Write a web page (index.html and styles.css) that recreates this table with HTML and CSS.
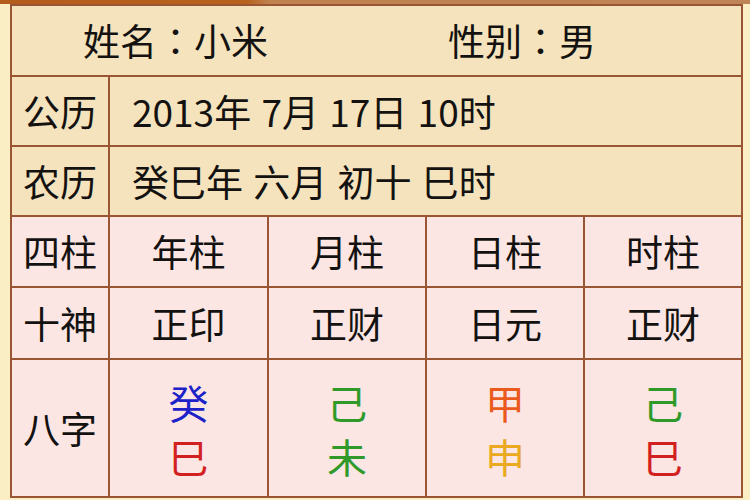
FILE: index.html
```html
<!DOCTYPE html>
<html lang="zh">
<head>
<meta charset="utf-8">
<link rel="stylesheet" href="styles.css">
</head>
<body>
<div class="topbar"></div>
<div class="chart">
  <div class="cell head full">
    <span class="name">姓名<span class="colon" lang="zh-Hant-TW">：</span>小米</span>
    <span class="gender">性别<span class="colon" lang="zh-Hant-TW">：</span>男</span>
  </div>
  <div class="cell cream label">公历</div>
  <div class="cell cream value">2013年 7月 17日 10时</div>
  <div class="cell cream label">农历</div>
  <div class="cell cream value">癸巳年 六月 初十 巳时</div>

  <div class="cell pink label">四柱</div>
  <div class="cell pink">年柱</div>
  <div class="cell pink">月柱</div>
  <div class="cell pink">日柱</div>
  <div class="cell pink">时柱</div>

  <div class="cell pink label">十神</div>
  <div class="cell pink">正印</div>
  <div class="cell pink">正财</div>
  <div class="cell pink">日元</div>
  <div class="cell pink">正财</div>

  <div class="cell pink label">八字</div>
  <div class="cell pink bazi"><span class="water">癸</span><span class="fire">巳</span></div>
  <div class="cell pink bazi"><span class="earth">己</span><span class="earth">未</span></div>
  <div class="cell pink bazi"><span class="wood">甲</span><span class="metal">申</span></div>
  <div class="cell pink bazi"><span class="earth">己</span><span class="fire">巳</span></div>
</div>
</body>
</html>
```
FILE: styles.css
```css
html, body {
  margin: 0;
  padding: 0;
}
body {
  width: 750px;
  height: 500px;
  overflow: hidden;
  background: #f9eec4;
  font-family: "Noto Sans CJK SC", "Noto Sans", sans-serif;
  color: #141210;
}
.topbar {
  height: 4px;
  background: linear-gradient(90deg, #b45c1c 0%, #b7621f 33%, #c08250 36%, #bf8456 100%);
}
.chart {
  margin-left: 10px;
  width: 729px;
  display: grid;
  grid-template-columns: 96px 157px 156px 156px 156px;
  grid-template-rows: 69px 68px 68px 69px 70px 136px;
  gap: 2px;
  padding: 2px;
  background: #9a5634;
}
.cell {
  display: flex;
  align-items: center;
  justify-content: center;
  font-size: 37px;
  line-height: 1;
}
.head {
  background: #f4e3bd;
  justify-content: flex-start;
}
.full {
  grid-column: 1 / 6;
}
.name {
  margin-left: 71px;
}
.gender {
  margin-left: 180px;
}
.colon {
  font-family: "Noto Sans CJK TC", "Noto Sans CJK SC", sans-serif;
}
.cream {
  background: #f4e3bd;
}
.pink {
  background: #fbe6e4;
}
.value {
  grid-column: 2 / 6;
  justify-content: flex-start;
  padding-left: 22px;
  word-spacing: 2px;
}
.bazi {
  flex-direction: column;
  font-size: 40px;
  line-height: 54px;
  padding-top: 2px;
}
.water { color: #1c22c8; }
.fire { color: #d21f1f; }
.earth { color: #2f9a2a; }
.wood { color: #ea5a1c; }
.metal { color: #eaa91e; }
```
